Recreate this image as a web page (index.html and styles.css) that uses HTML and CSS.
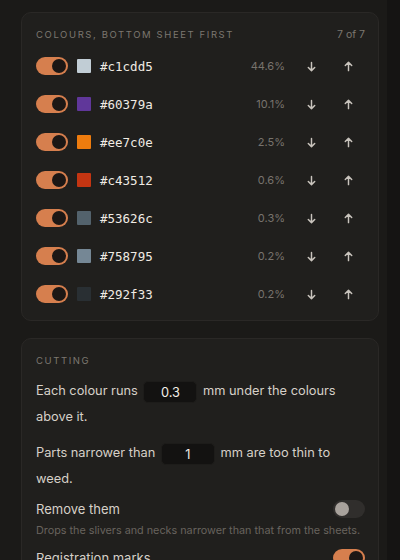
FILE: index.html
```html
<!DOCTYPE html>
<html lang="en">
<head>
    <meta charset="UTF-8">
    <meta name="viewport" content="width=device-width, initial-scale=1.0">
    <title>Sheets</title>
    <link rel="stylesheet" href="styles.css">
</head>
<body>
<div class="panel">

    <!-- Colour order -->
    <div class="card">
        <div class="card-head">
            <span class="card-title">Colours, bottom sheet first</span>
            <span class="count">7 of 7</span>
        </div>

        <div class="colour-list">
            <div class="colour-row">
                <span class="toggle on"></span>
                <span class="swatch" style="background:#c1cdd5"></span>
                <span class="hex">#c1cdd5</span>
                <span class="share">44.6%</span>
                <button class="move"><svg viewBox="0 0 12 12"><path d="M6 1.5v9M2.5 7l3.5 3.5L9.5 7"/></svg></button>
                <button class="move"><svg viewBox="0 0 12 12"><path d="M6 10.5v-9M2.5 5L6 1.5 9.5 5"/></svg></button>
            </div>
            <div class="colour-row">
                <span class="toggle on"></span>
                <span class="swatch" style="background:#60379a"></span>
                <span class="hex">#60379a</span>
                <span class="share">10.1%</span>
                <button class="move"><svg viewBox="0 0 12 12"><path d="M6 1.5v9M2.5 7l3.5 3.5L9.5 7"/></svg></button>
                <button class="move"><svg viewBox="0 0 12 12"><path d="M6 10.5v-9M2.5 5L6 1.5 9.5 5"/></svg></button>
            </div>
            <div class="colour-row">
                <span class="toggle on"></span>
                <span class="swatch" style="background:#ee7c0e"></span>
                <span class="hex">#ee7c0e</span>
                <span class="share">2.5%</span>
                <button class="move"><svg viewBox="0 0 12 12"><path d="M6 1.5v9M2.5 7l3.5 3.5L9.5 7"/></svg></button>
                <button class="move"><svg viewBox="0 0 12 12"><path d="M6 10.5v-9M2.5 5L6 1.5 9.5 5"/></svg></button>
            </div>
            <div class="colour-row">
                <span class="toggle on"></span>
                <span class="swatch" style="background:#c43512"></span>
                <span class="hex">#c43512</span>
                <span class="share">0.6%</span>
                <button class="move"><svg viewBox="0 0 12 12"><path d="M6 1.5v9M2.5 7l3.5 3.5L9.5 7"/></svg></button>
                <button class="move"><svg viewBox="0 0 12 12"><path d="M6 10.5v-9M2.5 5L6 1.5 9.5 5"/></svg></button>
            </div>
            <div class="colour-row">
                <span class="toggle on"></span>
                <span class="swatch" style="background:#53626c"></span>
                <span class="hex">#53626c</span>
                <span class="share">0.3%</span>
                <button class="move"><svg viewBox="0 0 12 12"><path d="M6 1.5v9M2.5 7l3.5 3.5L9.5 7"/></svg></button>
                <button class="move"><svg viewBox="0 0 12 12"><path d="M6 10.5v-9M2.5 5L6 1.5 9.5 5"/></svg></button>
            </div>
            <div class="colour-row">
                <span class="toggle on"></span>
                <span class="swatch" style="background:#758795"></span>
                <span class="hex">#758795</span>
                <span class="share">0.2%</span>
                <button class="move"><svg viewBox="0 0 12 12"><path d="M6 1.5v9M2.5 7l3.5 3.5L9.5 7"/></svg></button>
                <button class="move"><svg viewBox="0 0 12 12"><path d="M6 10.5v-9M2.5 5L6 1.5 9.5 5"/></svg></button>
            </div>
            <div class="colour-row">
                <span class="toggle on"></span>
                <span class="swatch" style="background:#292f33"></span>
                <span class="hex">#292f33</span>
                <span class="share">0.2%</span>
                <button class="move"><svg viewBox="0 0 12 12"><path d="M6 1.5v9M2.5 7l3.5 3.5L9.5 7"/></svg></button>
                <button class="move"><svg viewBox="0 0 12 12"><path d="M6 10.5v-9M2.5 5L6 1.5 9.5 5"/></svg></button>
            </div>
        </div>
    </div>

    <!-- Cutting options -->
    <div class="card">
        <div class="card-head">
            <span class="card-title">Cutting</span>
        </div>

        <p class="line">Each colour runs <span class="num">0.3</span> mm under the colours above it.</p>
        <p class="line last">Parts narrower than <span class="num">1</span> mm are too thin to weed.</p>

        <div class="option">
            <span class="option-name">Remove them</span>
            <span class="toggle"></span>
        </div>
        <div class="hint">Drops the slivers and necks narrower than that from the sheets.</div>

        <div class="option">
            <span class="option-name">Registration marks</span>
            <span class="toggle on"></span>
        </div>
    </div>

</div>
</body>
</html>
```

FILE: styles.css
```css
body {
    margin: 0;
    background-color: #151413;
    font-family: Inter, "Noto Sans", sans-serif;
    color: #d8d2ca;
}
.panel {
    width: 387px;
    min-height: 560px;
    padding: 12px 0 0 21px;
    box-sizing: border-box;
    background-color: #1b1a18;
}
.card {
    width: 358px;
    box-sizing: border-box;
    padding: 15px 13px 12px 14px;
    margin-bottom: 17px;
    background-color: #201f1d;
    border: 1px solid #2a2826;
    border-radius: 10px;
}
.card-head {
    display: flex;
    justify-content: space-between;
    align-items: center;
    height: 12px;
    margin-bottom: 12px;
}
.card-title {
    font-size: 9.5px;
    letter-spacing: 1.6px;
    text-transform: uppercase;
    color: #7c7770;
}
.count {
    font-size: 10.5px;
    color: #7c7770;
}
.colour-list {
    display: flex;
    flex-direction: column;
    gap: 10px;
}
.colour-row {
    display: flex;
    align-items: center;
    height: 28px;
}
.toggle {
    position: relative;
    flex: none;
    width: 32px;
    height: 18px;
    border-radius: 9px;
    background-color: #302e2c;
}
.toggle::after {
    content: "";
    position: absolute;
    top: 2px;
    left: 2px;
    width: 14px;
    height: 14px;
    border-radius: 50%;
    background-color: #a8a29c;
}
.toggle.on {
    background-color: #d67f4e;
}
.toggle.on::after {
    left: 16px;
    background-color: #1c1715;
}
.swatch {
    width: 14px;
    height: 14px;
    margin-left: 9px;
    border-radius: 1px;
}
.hex {
    margin-left: 9px;
    font-family: "DejaVu Sans Mono", monospace;
    font-size: 12.5px;
    color: #f0ebe4;
    flex: 1;
}
.share {
    width: 50px;
    text-align: right;
    font-size: 11px;
    color: #78736d;
    margin-right: 12px;
}
.move {
    width: 28px;
    height: 26px;
    padding: 0;
    margin-left: 9px;
    border: none;
    border-radius: 5px;
    background: transparent;
    display: flex;
    align-items: center;
    justify-content: center;
}
.move:first-of-type {
    margin-left: 0;
}
.move svg {
    width: 11px;
    height: 11px;
    fill: none;
    stroke: #c9c4bd;
    stroke-width: 1.6;
    stroke-linecap: round;
    stroke-linejoin: round;
}
.colour-row .move:last-child {
    margin-right: 3px;
}
.line {
    margin: 0 0 10px;
    font-size: 12.8px;
    line-height: 26px;
    color: #d6d0c8;
}
.line.last {
    margin-bottom: 7px;
}
.num {
    display: inline-block;
    width: 54px;
    height: 22px;
    line-height: 22px;
    margin: 0 2px;
    text-align: center;
    vertical-align: middle;
    background-color: #131211;
    border: 1px solid #1d1c1a;
    border-radius: 5px;
    color: #f4efe8;
    box-sizing: border-box;
}
.option {
    display: flex;
    justify-content: space-between;
    align-items: center;
    font-size: 13px;
    color: #d6d0c8;
    height: 20px;
}
.hint {
    margin: 5px 0 11px;
    font-size: 10.8px;
    color: #68635e;
}
```
